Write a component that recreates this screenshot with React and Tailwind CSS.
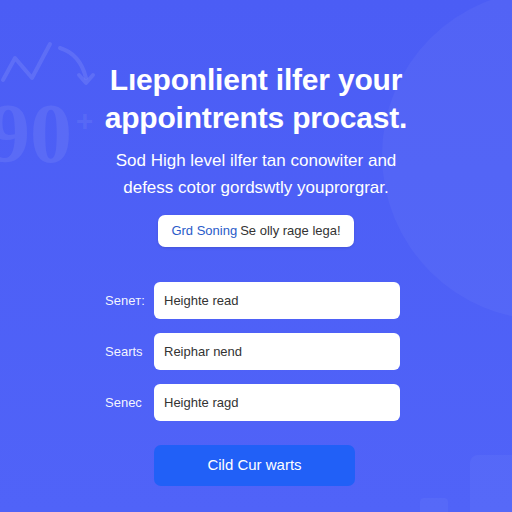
import React from 'react';

const fields = [
  { label: 'Seneт:', value: 'Heighte read' },
  { label: 'Searts', value: 'Reiphar nend' },
  { label: 'Senec', value: 'Heighte ragd' },
];

function Backdrop() {
  return (
    <div className="pointer-events-none absolute inset-0 overflow-hidden">
      {/* big soft circle on the right */}
      <div className="absolute left-[382px] top-[-10px] h-[330px] w-[330px] rounded-full bg-white/[0.04]" />
      {/* faint chart line top left */}
      <svg className="absolute left-0 top-[20px]" width="100" height="70" viewBox="0 0 100 70" fill="none">
        <path d="M3 60 L15 38 L32 58 L50 24" stroke="white" strokeOpacity="0.1" strokeWidth="4" strokeLinecap="round" strokeLinejoin="round" />
        <path d="M60 28 Q80 34 86 58" stroke="white" strokeOpacity="0.1" strokeWidth="4" strokeLinecap="round" />
        <path d="M79 55 L86 63 L93 55" stroke="white" strokeOpacity="0.1" strokeWidth="4" strokeLinecap="round" strokeLinejoin="round" />
      </svg>
      <div className="absolute left-[-12px] top-[92px] text-[84px] font-bold leading-none text-white/[0.08] [font-family:'Liberation_Serif',serif]">
        90
      </div>
      <div className="absolute left-[76px] top-[106px] text-[30px] font-bold leading-none text-white/[0.08] [font-family:'Liberation_Sans',sans-serif]">
        +
      </div>
      {/* soft blocks bottom right */}
      <div className="absolute left-[470px] top-[455px] h-[80px] w-[70px] rounded-lg bg-white/[0.04]" />
      <div className="absolute left-[420px] top-[498px] h-[30px] w-[28px] rounded bg-white/[0.04]" />
    </div>
  );
}

export default function App() {
  return (
    <div className="relative h-[512px] w-[512px] overflow-hidden bg-gradient-to-b from-[#4b5df5] to-[#5063f8] [font-family:'Liberation_Sans',Arial,sans-serif]">
      <Backdrop />
      <div className="relative flex flex-col items-center pt-[61px]">
        <h1 className="text-center text-[30px] font-bold leading-[38px] tracking-[-0.2px] text-white">
          Lıeponlient ilfer your
          <br />
          appointrents procast.
        </h1>
        <p className="mt-[10px] text-center text-[17px] leading-[27px] text-white">
          Sod High level ilfer tan conowiter and
          <br />
          defess cotor gordswtly youprorgrar.
        </p>
        <div className="mt-[14px] flex h-[32px] w-[196px] items-center justify-center rounded-[7px] bg-white text-[13px] shadow-sm">
          <span className="text-[#2a5bc9]">Grd Soning</span>
          <span className="ml-[3px] text-[#333]">Se olly rage lega!</span>
        </div>

        <div className="ml-[-7px] mt-[35px] flex flex-col gap-[14px]">
          {fields.map((f) => (
            <div key={f.value} className="flex items-center">
              <span className="w-[49px] text-[13px] text-white/95">{f.label}</span>
              <div className="flex h-[37px] w-[246px] items-center rounded-[6px] bg-white px-[10px] text-[13px] text-[#333]">
                {f.value}
              </div>
            </div>
          ))}
        </div>

        <button className="ml-[-3px] mt-[24px] flex h-[41px] w-[201px] items-center justify-center rounded-[7px] bg-[#2160f7] text-[15px] text-white">
          Cild Cur warts
        </button>
      </div>
    </div>
  );
}
